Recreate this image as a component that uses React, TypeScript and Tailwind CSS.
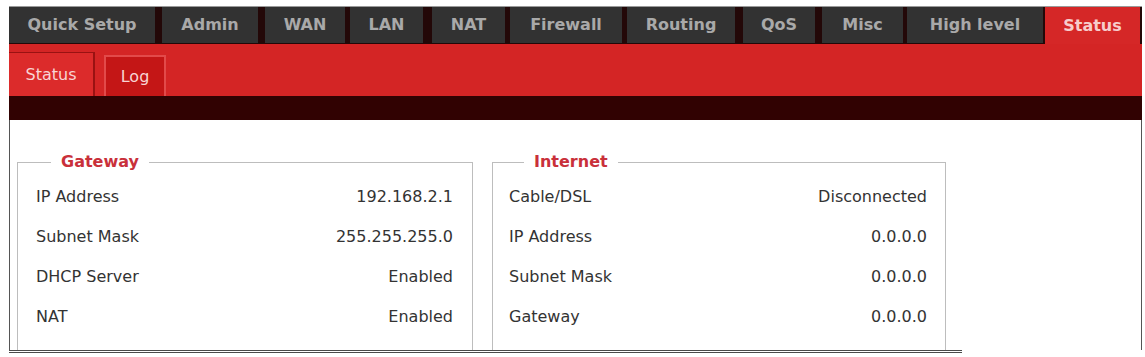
import React from 'react';

const FONT = '"DejaVu Sans", Verdana, sans-serif';

// top menu: each tab carries its own left offset and width so the
// separators land where the screenshot has them
const TABS = [
  { label: 'Quick Setup', cls: 'ml-0 w-[146px]' },
  { label: 'Admin', cls: 'ml-[7px] w-[96px]' },
  { label: 'WAN', cls: 'ml-[7px] w-[80px]' },
  { label: 'LAN', cls: 'ml-[5px] w-[73px]' },
  { label: 'NAT', cls: 'ml-[9px] w-[73px]' },
  { label: 'Firewall', cls: 'ml-[5px] w-[112px]' },
  { label: 'Routing', cls: 'ml-[5px] w-[108px]' },
  { label: 'QoS', cls: 'ml-[8px] w-[72px]' },
  { label: 'Misc', cls: 'ml-[7px] w-[81px]' },
  { label: 'High level', cls: 'ml-[4px] w-[136px]' },
];

const GATEWAY: [string, string][] = [
  ['IP Address', '192.168.2.1'],
  ['Subnet Mask', '255.255.255.0'],
  ['DHCP Server', 'Enabled'],
  ['NAT', 'Enabled'],
];

const INTERNET: [string, string][] = [
  ['Cable/DSL', 'Disconnected'],
  ['IP Address', '0.0.0.0'],
  ['Subnet Mask', '0.0.0.0'],
  ['Gateway', '0.0.0.0'],
];

function Group({ title, rows, cls }: { title: string; rows: [string, string][]; cls: string }) {
  return (
    <fieldset className={`border border-b-0 border-[#bdbdbd] ${cls}`}>
      <legend className="ml-[15px] px-[10px] text-[16px] leading-[20px] font-bold text-[#c9303a]">{title}</legend>
      <div className="pt-[5px] pb-[20px]">
        {rows.map(([k, v]) => (
          <div key={k} className="h-[40px] flex items-center justify-between text-[16px] text-[#333]">
            <span>{k}</span>
            <span>{v}</span>
          </div>
        ))}
      </div>
    </fieldset>
  );
}

export default function App() {
  return (
    <div className="w-[1145px] h-[357px] bg-white overflow-hidden pt-[6px]" style={{ fontFamily: FONT }}>
      <div className="ml-[9px] w-[1133px]">
        {/* Main menu */}
        <div className="h-[38px] flex bg-[#230808] border-t border-[#9a9a9a]">
          {TABS.map((t) => (
            <div
              key={t.label}
              className={`${t.cls} h-[36px] bg-[#323232] flex items-center justify-center text-[16px] font-bold text-[#a9a9a9]`}
            >
              {t.label}
            </div>
          ))}
          <div className="ml-[2px] w-[95px] h-[37px] bg-[#d52727] flex items-center justify-center text-[16px] font-bold text-[#f7cccc]">
            Status
          </div>
        </div>

        {/* Sub menu */}
        <div className="h-[52px] bg-[#d42525] flex items-end">
          <div className="w-[86px] h-[44px] bg-[#dc2b2b] border-r-2 border-t border-[#9a1212] flex items-center justify-center text-[16px] text-[#f8d4d4]">
            Status
          </div>
          <div className="ml-[9px] w-[62px] h-[41px] bg-[#c41616] border-2 border-b-0 border-[#e24a4a] flex items-center justify-center text-[16px] text-[#f8d4d4]">
            Log
          </div>
        </div>
        <div className="h-[24px] bg-[#310202]" />

        {/* Content */}
        <div className="h-[230px] border-x border-[#555] overflow-hidden">
          <div className="flex pt-[32px] pl-[7px]">
            <Group title="Gateway" rows={GATEWAY} cls="w-[456px] pl-[18px] pr-[19px]" />
            <Group title="Internet" rows={INTERNET} cls="ml-[19px] w-[454px] pl-[16px] pr-[18px]" />
          </div>
        </div>
        <div className="w-[953px] h-[3px] border-y border-[#4a4a4a]" />
      </div>
    </div>
  );
}
